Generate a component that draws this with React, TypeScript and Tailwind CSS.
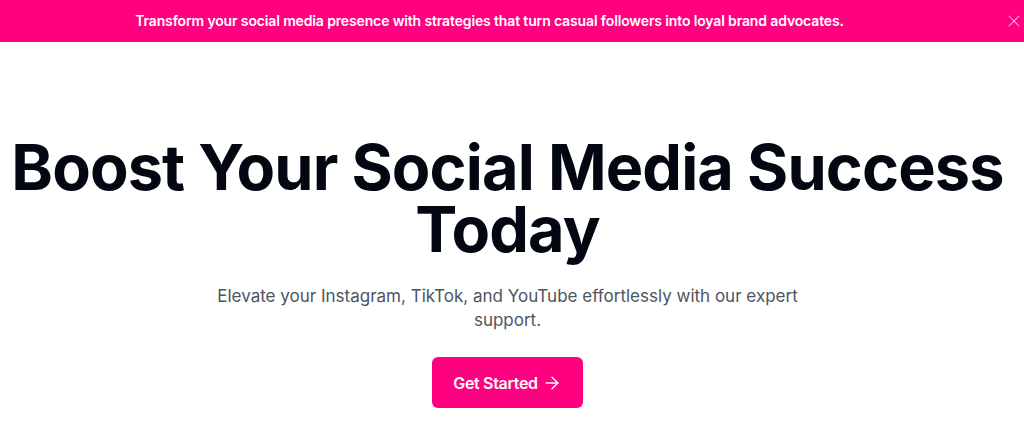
import { ArrowRight, X } from "lucide-react";

export default function App() {
  return (
    <div className="min-h-screen bg-white font-['Inter',sans-serif]">
      <div className="flex h-[42px] items-center bg-[#ff0080] pl-4">
        <p className="flex-1 text-center text-sm font-semibold tracking-[-0.01em] text-white">
          Transform your social media presence with strategies that turn casual followers into loyal brand advocates.
        </p>
        <button className="ml-[41px] flex h-5 w-5 items-center justify-center text-white/70">
          <X className="h-5 w-5" strokeWidth={1.25} />
        </button>
      </div>

      <section className="flex flex-col items-center pr-[9px] pt-[94px] text-center">
        <h1 className="text-[63px] font-bold leading-[62px] tracking-[-0.014em] text-[#030712]">
          Boost Your Social Media Success
          <br />
          Today
        </h1>
        <p className="mt-6 max-w-[640px] px-4 text-[17px] leading-6 text-[#4b5563]">
          Elevate your Instagram, TikTok, and YouTube effortlessly with our expert support.
        </p>
        <button className="mt-[25px] flex h-[51px] items-center gap-1 rounded-md bg-[#ff0080] px-[21px] font-semibold tracking-[-0.02em] text-white">
          Get Started
          <ArrowRight className="h-5 w-5" strokeWidth={1.75} />
        </button>
      </section>
    </div>
  );
}
